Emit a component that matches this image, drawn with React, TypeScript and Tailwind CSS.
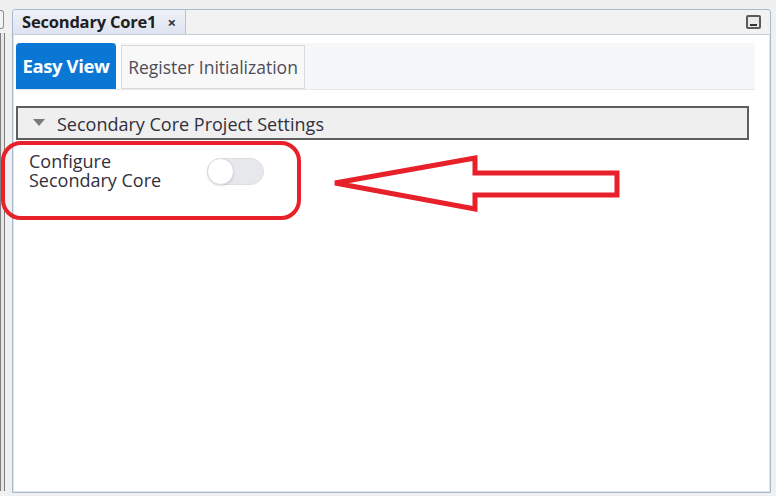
import React from 'react'

function LeftStrip() {
  return (
    <div className="w-[9px] shrink-0 flex flex-col pt-[10px] pb-[5px]">
      <div className="h-[19px] w-[4px] border border-l-0 border-[#8a8f96] rounded-r-[3px] bg-[#f4f4f4]" />
      <div className="mt-[4px] flex-1 w-[5px] border-x border-[#7d7d7d] bg-[#e6e6e6]" />
    </div>
  )
}

function Toggle() {
  return (
    <div className="relative w-[57px] h-[27px] rounded-full bg-[#e6e8eb] border border-[#dcdfe3]">
      <div className="absolute left-[-1px] top-[-1px] w-[27px] h-[27px] rounded-full bg-white border border-[#d8dadd] shadow-[0_1px_2px_rgba(0,0,0,0.12)]" />
    </div>
  )
}

export default function App() {
  return (
    <div
      className="relative w-[776px] h-[496px] bg-[#f0f0f0] flex overflow-hidden text-[#30303c]"
      style={{ fontFamily: '"Open Sans", "Noto Sans", sans-serif' }}
    >
      <LeftStrip />

      {/* Editor panel */}
      <div className="ml-[3px] mt-[9px] mb-[3px] w-[759px] flex flex-col border border-[#a7b9cc] rounded-t-[3px] bg-white shadow-[inset_0_0_0_1px_#dde6ef]">
        {/* Tab header */}
        <div className="h-[25px] shrink-0 flex items-stretch bg-[#f2f2f2] border-b border-[#c5cfdb] rounded-t-[3px]">
          <div className="w-[173px] flex items-center pl-[9px] pr-[9px] justify-between bg-gradient-to-b from-[#f0f2f9] to-[#dfe3f0] border-r border-[#b7c2d6] rounded-tl-[3px]">
            <span className="text-[16.5px] font-bold text-[#1e1e1e] tracking-[-0.2px]">Secondary Core1</span>
            <span className="text-[15px] font-bold text-[#333] leading-none">×</span>
          </div>
          <div className="flex-1" />
          <div className="flex items-center pr-[9px]">
            <div className="w-[15px] h-[14px] rounded-[2px] border-2 border-[#5b5b5b] bg-[#e9e9e9] flex items-end justify-center pb-[1px]">
              <div className="w-[7px] h-[2px] bg-[#333]" />
            </div>
          </div>
        </div>

        {/* Content */}
        <div className="flex-1 flex flex-col pl-[3px] pr-[15px] pt-[8px]">
          {/* Inner tabs */}
          <div className="h-[47px] flex items-stretch bg-[#f6f7f9] border-b border-[#e6e8eb]">
            <div className="w-[100px] bg-[#0a77d5] rounded-t-[4px] flex items-center justify-center">
              <span className="text-[18.5px] font-bold text-white tracking-[-0.4px]">Easy View</span>
            </div>
            <div className="w-[5px] bg-white" />
            <div className="mt-[2px] w-[184px] bg-[#f8f8f8] border border-[#dadada] flex items-center justify-center">
              <span className="text-[17.5px] text-[#4d4d58]">Register Initialization</span>
            </div>
            <div className="flex-1" />
          </div>

          {/* Section */}
          <div className="mt-[16px] mr-[6px] h-[34px] bg-[#efefef] border-2 border-[#5e5e5e] flex items-center pl-[15px] gap-[12px]">
            <svg width="12" height="8" viewBox="0 0 12 8">
              <polygon points="0,0 12,0 6,7" fill="#7a7a7a" />
            </svg>
            <span className="text-[18px] leading-[22px] pt-[2px] text-[#30303c]">Secondary Core Project Settings</span>
          </div>

          <div className="flex items-start pl-[13px] pt-[12px]">
            <div className="w-[178px] text-[18px] leading-[19px] text-[#30303c]">
              <div>Configure</div>
              <div>Secondary Core</div>
            </div>
            <div className="pt-[6px]">
              <Toggle />
            </div>
          </div>
        </div>
      </div>

      {/* Annotation overlays */}
      <div className="absolute left-[1px] top-[141px] w-[300px] h-[79px] border-[4px] border-[#e8202a] rounded-[20px]" />
      <svg className="absolute left-[330px] top-[152px]" width="295" height="64" viewBox="0 0 295 64">
        <polygon
          points="5,31 145,6 145,21 287,21 287,43 145,43 145,57"
          fill="none"
          stroke="#e8202a"
          strokeWidth="5"
          strokeLinejoin="miter"
        />
      </svg>
    </div>
  )
}
